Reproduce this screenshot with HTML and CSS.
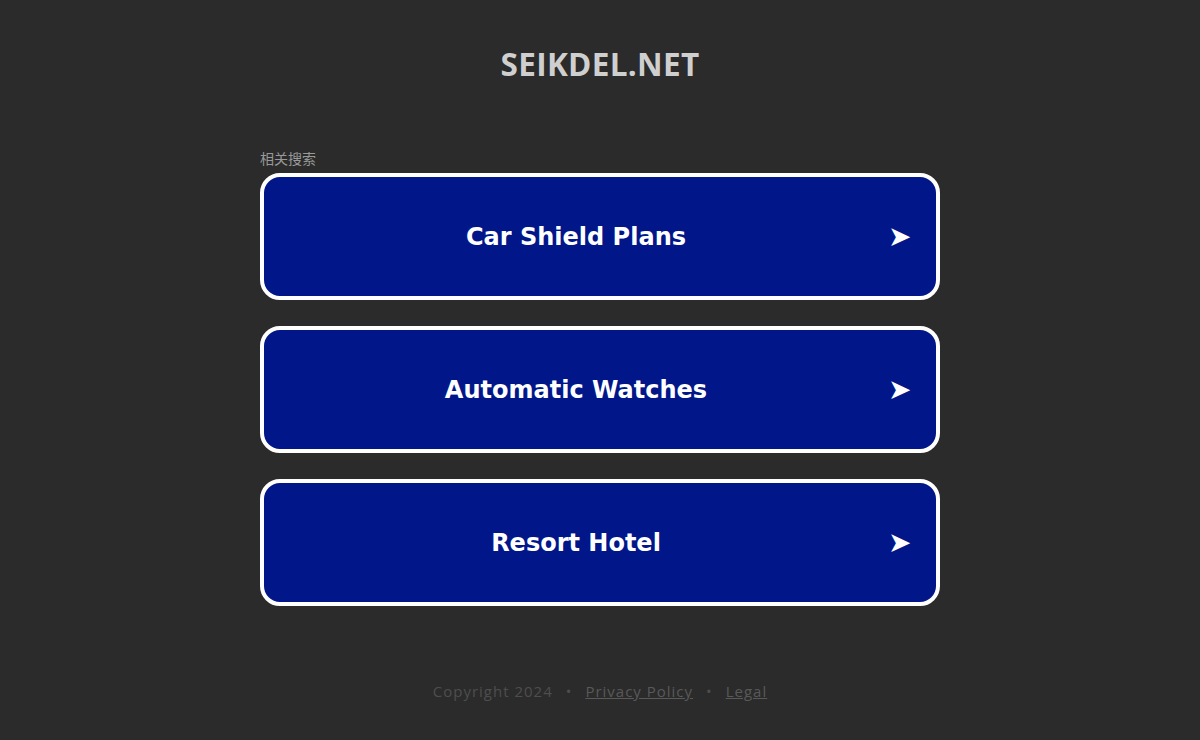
FILE: index.html
```html
<!DOCTYPE html>
<html>
<head>
<meta charset="utf-8">
<link rel="stylesheet" href="styles.css">
</head>
<body>
<div class="page">
  <header class="header"><h1 class="domain">SEIKDEL.NET</h1></header>
  <main class="main">
    <div class="label">相关搜索</div>
    <ul class="links">
      <li><a class="link" href="#"><span class="text">Car Shield Plans</span><span class="arrow">➤</span></a></li>
      <li><a class="link" href="#"><span class="text">Automatic Watches</span><span class="arrow">➤</span></a></li>
      <li><a class="link" href="#"><span class="text">Resort Hotel</span><span class="arrow">➤</span></a></li>
    </ul>
  </main>
  <footer class="footer">
    <span>Copyright 2024</span><span class="dot">•</span><a href="#">Privacy Policy</a><span class="dot">•</span><a href="#">Legal</a>
  </footer>
</div>
</body>
</html>
```
FILE: styles.css
```css
html, body { margin: 0; padding: 0; }
body { background: #2b2b2b; height: 740px; overflow: hidden; }
.page { display: flex; flex-direction: column; align-items: center; }
.header { padding-top: 45px; height: 80px; box-sizing: border-box; }
.domain { margin: 0; font-family: "Open Sans", "Noto Sans", sans-serif; font-weight: 700; font-size: 31.5px; line-height: 38px; color: #cfcfcf; letter-spacing: 0.3px; }
.main { width: 680px; margin-top: 70px; }
.label { font-family: "Noto Sans CJK SC", sans-serif; font-size: 14px; line-height: 16px; color: #999; margin-bottom: 7px; }
.links { list-style: none; margin: 0; padding: 0; display: flex; flex-direction: column; gap: 26px; }
.link { display: flex; align-items: center; height: 127px; box-sizing: border-box; border: 4px solid #fff; border-radius: 20px; background: #001689; text-decoration: none; color: #fff; padding: 0 26px 0 0; }
.text { flex: 1; text-align: center; font-family: "DejaVu Sans", Verdana, sans-serif; font-weight: 700; font-size: 24px; }
.arrow { font-family: "DejaVu Sans", sans-serif; font-size: 28px; line-height: 1; color: #fff; width: 22px; text-align: center; }
.footer { margin-top: 75px; font-family: "Open Sans", "Noto Sans", sans-serif; font-size: 15px; color: #4e4e4e; letter-spacing: 1px; display: flex; align-items: center; }
.footer a { color: #595959; }
.dot { margin: 0 13px; font-size: 15px; }
```
